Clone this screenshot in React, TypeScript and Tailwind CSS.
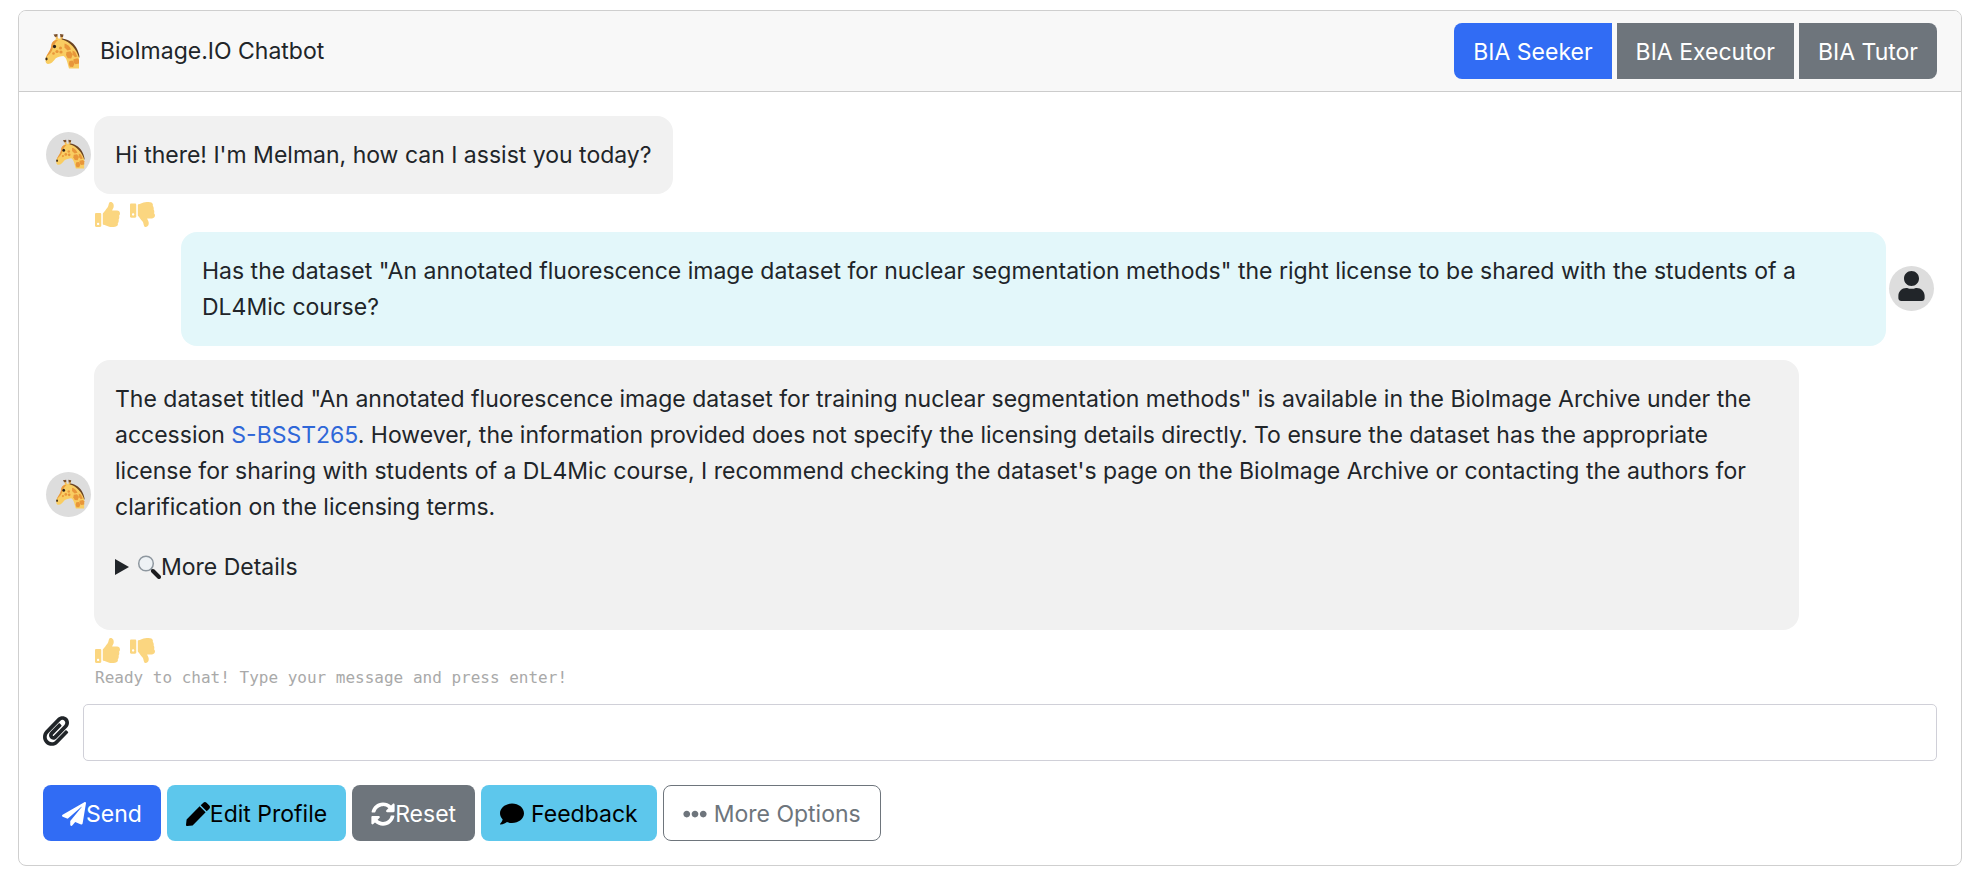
import React from "react";
import { FaComment, FaEllipsisH, FaPaperPlane, FaPaperclip, FaPen, FaSyncAlt, FaThumbsDown, FaThumbsUp, FaUser } from "react-icons/fa";

function Giraffe({ className }: { className: string }) {
  return (
    <svg viewBox="0 0 36 36" className={className} aria-hidden="true">
      <path d="M12.500 3.500 13.500 8M18 3 17 8" stroke="#f3bd5c" strokeWidth="2.200" />
      <path d="M9.500 1.500 13.500 1v2.500l-2.500.5zM16 1l3.500.5-.5 2.500-2.500.2z" fill="#7a4f2a" />
      <path d="M18 5.500c7 .5 13 5.500 15.500 11.500 1 2.500 2 5 2 7.500l-2-.5C31 18 25 9 17 7.500z" fill="#6b4423" />
      <path d="M11 7c1-1.500 5-2 7-.500C26 8 33 17 35 24.500v11H25c-1.500-5-2-10.500-5.500-12.500-3 .5-6 .8-8 2.500-2 2.500-4 5.500-7.500 5.500C1.500 31 1 27 2 24c2-4 5-6 5.500-11C8 10 9 8.500 11 7z" fill="#f9cd62" />
      <path d="M7.500 11c1-3 4-4.500 6.500-4-3 2.500-4.500 5.500-6 10.500C6.500 21 3.500 22 2 25c1-5 5-7 5.500-14z" fill="#ea9a3e" />
      <g fill="#e8963a">
        <path d="M20.500 10.500c2.500.5 5.500 3 6.500 6l-3.500 1-3-3z" />
        <path d="m22.500 19 4-.800 2.200 3.300-1.500 4-3.500-.2-1.700-3.300z" />
        <path d="m28.500 17.500 2.500 1.200 2.300 4.800-2.300.8-2.500-2.800z" />
        <path d="m29.500 26.200 4-1 1.500 1.500v3.800l-3.500.7-2.200-2z" />
        <path d="m25.500 28 3-.5 2 3.200-1.500 3.300-3.200-.2-1-3z" />
        <circle cx="13" cy="18.500" r="1.600" /><circle cx="16.500" cy="15" r="1.500" /><circle cx="17" cy="19" r="1.600" /><circle cx="9.500" cy="20.500" r="1.300" />
      </g>
      <ellipse cx="10.500" cy="13.500" rx="1.600" ry="1.800" fill="#2b2118" />
      <ellipse cx="2.500" cy="26" rx="1.100" ry="1.400" fill="#3b2817" />
    </svg>
  );
}

function Avatar({ children }: { children: React.ReactNode }) {
  return <div className="mb-0.5 flex size-[45px] shrink-0 items-center justify-center rounded-full bg-[#dddddd]">{children}</div>;
}

function Rating() {
  return (
    <div className="ml-[49px] flex h-[38px] gap-2.5 pt-2 text-[#fbd680]">
      <button aria-label="Helpful" className="h-6"><FaThumbsUp className="size-[25px]" /></button>
      <button aria-label="Not helpful" className="h-6"><FaThumbsDown className="size-[25px]" /></button>
    </div>
  );
}

const bubble = "rounded-2xl px-[21px] py-[21px]";
const tab = "h-14 px-[19px] pt-0.5";
const button = "flex h-14 items-center rounded-lg px-[19px] pt-0.5";

export default function App() {
  return (
    <div className="bg-white px-[18px] pt-2.5 pb-6 font-['Inter','Noto_Sans',sans-serif] text-[23px] leading-9 text-[#212529]">
      <main className="mr-1 overflow-hidden rounded-lg border border-[#cfcfcf]">
        <header className="flex h-[81px] items-center justify-between border-b border-[#cccccc] bg-[#f8f8f8] pr-6 pl-[25px]">
          <div className="flex items-center gap-5">
            <Giraffe className="size-9" />
            <h1>BioImage.IO Chatbot</h1>
          </div>
          <nav className="flex gap-[5px] text-white">
            <button className={`${tab} rounded-l-lg bg-[#316cf4]`}>BIA Seeker</button>
            <button className={`${tab} bg-[#6e757c]`}>BIA Executor</button>
            <button className={`${tab} rounded-r-lg bg-[#6e757c]`}>BIA Tutor</button>
          </nav>
        </header>

        <div className="px-6 pt-6 pb-6">
          <section className="px-[3px]">
            <div className="flex items-center gap-[3px]">
              <Avatar><Giraffe className="ml-0.5 size-[30px]" /></Avatar>
              <div className={`${bubble} bg-[#f1f1f1]`}>Hi there! I'm Melman, how can I assist you today?</div>
            </div>
            <Rating />

            <div className="ml-[135px] flex items-center gap-[3px]">
              <div className={`${bubble} grow bg-[#e3f7fa]`}>
                Has the dataset "An annotated fluorescence image dataset for nuclear segmentation methods" the right license to be shared with the students of a DL4Mic course?
              </div>
              <Avatar><FaUser className="mb-1 h-[30px] w-[27px]" /></Avatar>
            </div>

            <div className="mt-3.5 mr-[135px] flex items-center gap-[3px]">
              <Avatar><Giraffe className="ml-0.5 size-[30px]" /></Avatar>
              <div className={`${bubble} grow bg-[#f1f1f1]`}>
                <p className="mb-6">
                  The dataset titled "An annotated fluorescence image dataset for training nuclear segmentation methods" is available in the BioImage Archive under the accession <a href="#accession" className="text-[#2f67d8]">S-BSST265</a>. However, the information provided does not specify the licensing details directly. To ensure the dataset has the appropriate license for sharing with students of a DL4Mic course, I recommend checking the dataset's page on the BioImage Archive or contacting the authors for clarification on the licensing terms.
                </p>
                <details className="mb-6">
                  <summary className="flex items-center">
                    <svg viewBox="0 0 14 16" className="mr-2 h-4 w-3.5" aria-hidden="true"><path d="M0 0 14 8 0 16z" fill="#212529" /></svg>
                    <svg viewBox="0 0 24 24" className="size-6" aria-hidden="true">
                      <path d="m13.500 13.500 3 3" stroke="#6f7378" strokeWidth="2.200" />
                      <path d="m16 16 6 6" stroke="#1c1c1e" strokeWidth="4" strokeLinecap="round" />
                      <circle cx="9" cy="8.500" r="7.300" fill="#eef2f5" stroke="#8e979f" strokeWidth="1.500" />
                    </svg>
                    More Details
                  </summary>
                </details>
              </div>
            </div>
            <Rating />
          </section>

          <p className="ml-[52px] h-5 font-['DejaVu_Sans_Mono',monospace] text-base leading-5 text-[#a9a9a9]">
            Ready to chat! Type your message and press enter!
          </p>

          <div className="mt-4 flex items-center gap-3.5">
            <button aria-label="Attach a file" className="mb-1"><FaPaperclip className="h-[30px] w-[26px]" /></button>
            <input aria-label="Message" className="h-[57px] grow rounded-[5px] border border-[#d0d0d8] px-4" />
          </div>

          <div className="mt-6 flex gap-1.5">
            <button className={`${button} bg-[#316cf4] text-white`}><FaPaperPlane className="size-6" />Send</button>
            <button className={`${button} bg-[#5dc7ec] text-black`}><FaPen className="size-6" />Edit Profile</button>
            <button className={`${button} bg-[#6e757c] text-white`}><FaSyncAlt className="size-6" />Reset</button>
            <button className={`${button} gap-[7px] bg-[#5dc7ec] text-black`}><FaComment className="size-6" />Feedback</button>
            <button className={`${button} gap-[7px] border border-[#6e757c] text-[#6e757c]`}><FaEllipsisH className="size-6" />More Options</button>
          </div>
        </div>
      </main>
    </div>
  );
}
